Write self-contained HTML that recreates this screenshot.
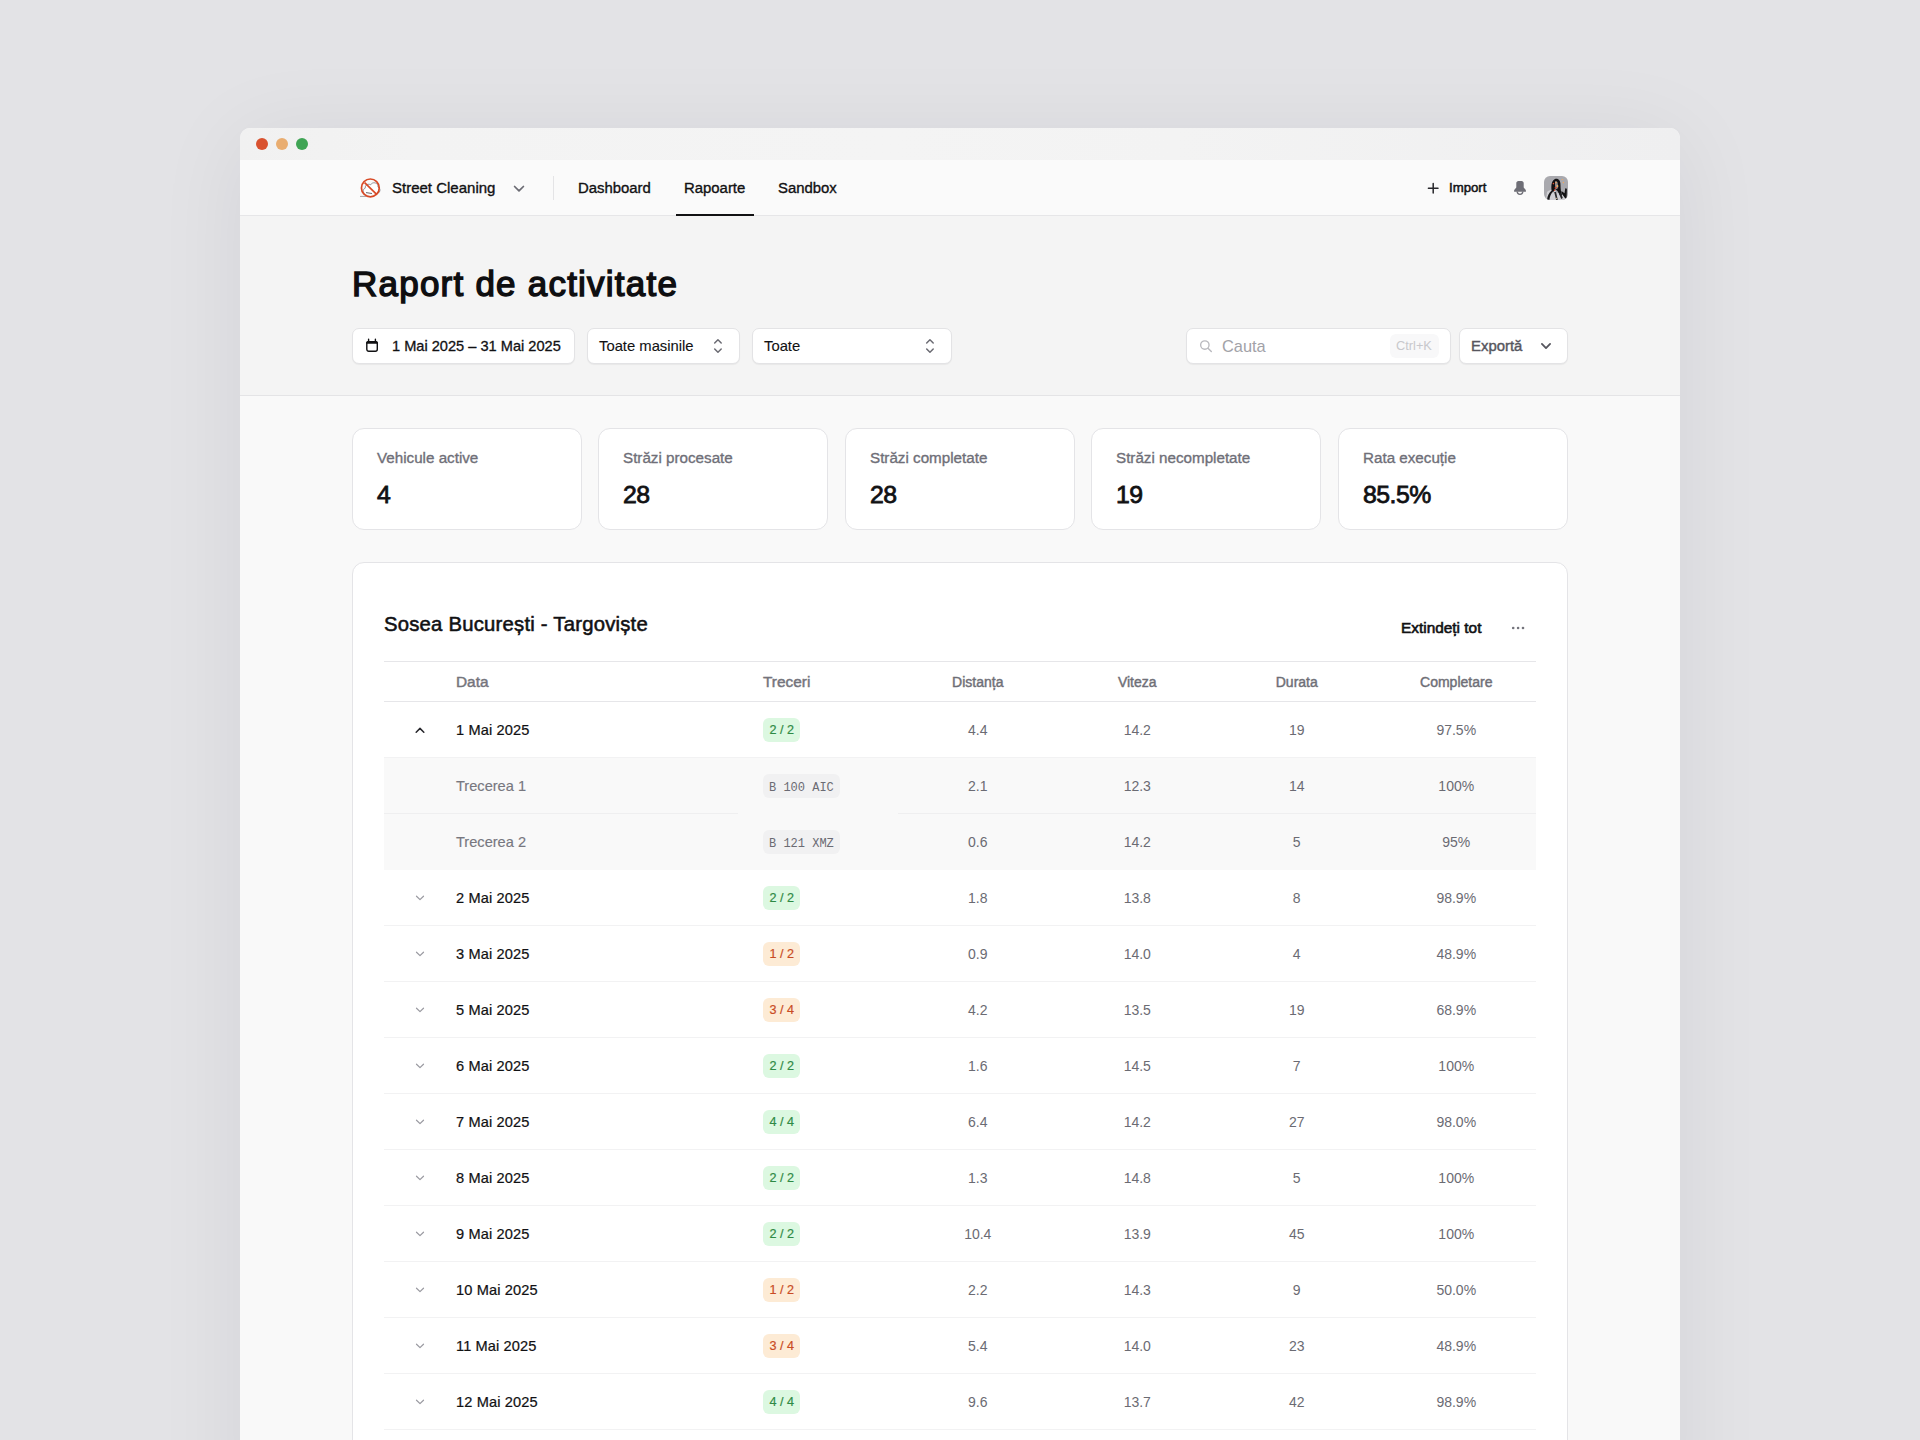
<!DOCTYPE html>
<html><head><meta charset="utf-8">
<style>
*{box-sizing:border-box;margin:0;padding:0}
html,body{width:1920px;height:1440px;overflow:hidden}
body{background:#e3e3e6;font-family:"Liberation Sans",sans-serif;color:#111113;position:relative}
.win{position:absolute;left:240px;top:128px;width:1440px;height:1400px;background:#f9f9f9;border-radius:10px 10px 0 0;overflow:hidden;box-shadow:0 10px 90px rgba(20,20,40,0.07)}
.titlebar{position:absolute;left:0;top:0;width:1440px;height:32px;background:linear-gradient(90deg,#f1f1f1 0%,#f3f3f3 12%,#f4f4f4 45%,#f3f3f3 65%,#efeff0 100%)}
.dot{position:absolute;top:10px;width:12px;height:12px;border-radius:50%}
.nav{position:absolute;left:0;top:32px;width:1440px;height:56px;background:#fafafa;border-bottom:1px solid #e6e6e8}
.hdr{position:absolute;left:0;top:88px;width:1440px;height:180px;background:#f4f4f4;border-bottom:1px solid #e4e4e6}
.a{position:absolute;white-space:nowrap;line-height:20px}
.btn{position:absolute;top:328px;height:36px;background:#fff;border:1px solid #e3e3e5;border-radius:7px;box-shadow:0 1px 1px rgba(0,0,0,0.05)}
.card{position:absolute;top:428px;width:230px;height:102px;background:#fff;border:1px solid #e4e4e7;border-radius:12px}
.card .lbl{position:absolute;left:24px;top:19px;font-size:15.2px;line-height:20px;color:#6f6f78;-webkit-text-stroke:0.35px #6f6f78;white-space:nowrap}
.card .val{position:absolute;left:24px;top:51px;font-size:24.8px;line-height:30px;color:#111113;-webkit-text-stroke:0.8px #111113;letter-spacing:-0.5px}
.tcard{position:absolute;left:352px;top:562px;width:1216px;height:1000px;background:#fff;border:1px solid #e4e4e7;border-radius:12px}
.tbl{position:absolute;left:384px;top:661px;width:1152px;border-top:1px solid #e6e6e9}
.th{display:flex;height:40px;border-bottom:1px solid #e6e6e9;align-items:center;font-size:15.4px;line-height:18px;padding-top:0px;color:#74747c;-webkit-text-stroke:0.45px #74747c}
.tr{display:flex;height:56px;border-bottom:1px solid #f2f2f3;align-items:center;font-size:14.6px;line-height:18px;color:#111113;padding-top:1px}
.tr.sub{background:#f9f9f9;border-bottom-color:#f9f9f9}
.tr.s1{border-bottom-color:transparent;background:linear-gradient(#efeff0,#efeff0) 0 100%/354px 1px no-repeat border-box,linear-gradient(#efeff0,#efeff0) 100% 100%/638px 1px no-repeat border-box,#f9f9f9}
.c0{width:72px;flex:none;display:flex;justify-content:center;padding-right:0}
.c1{width:307px;flex:none;padding-left:0}
.c2{width:135px;flex:none;padding-left:0}
.cn{width:159.5px;flex:none;text-align:center;color:#6b6b73;font-size:14px}
.tr .c1{-webkit-text-stroke:0.22px #111113;letter-spacing:0.12px}
.tr.sub .c1{color:#77777f;-webkit-text-stroke:0.15px #77777f;letter-spacing:0}
.bd{display:inline-block;height:24px;line-height:24px;border-radius:6px;padding:0 6.4px;font-size:12.6px;-webkit-text-stroke:0.2px currentColor}
.bd.g{background:#dcf8e1;color:#2f8a45}
.bd.o{background:#fdebd5;color:#c94b24}
.bd i{font-style:normal;position:relative;top:2px}
.bd.p{background:#f1f1f2;color:#6b6b73;font-family:"Liberation Mono",monospace;font-size:12px;-webkit-text-stroke:0;padding:0 6px}
</style></head><body>
<div class="win">
  <div class="titlebar">
    <div class="dot" style="left:16px;background:#d9522f"></div>
    <div class="dot" style="left:36px;background:#e9ad70"></div>
    <div class="dot" style="left:56px;background:#3fa454"></div>
  </div>
  <div class="nav"></div>
  <div class="hdr"></div>
</div>

<!-- NAV -->
<svg class="a" style="left:356px;top:175px" width="28" height="26" viewBox="0 0 28 26">
  <path d="M8.5 18.5c-1.2-.8-1.6-2.4-1-3.8.3-.8 1-1.3 1.7-1.5-.2-1.8.9-3.5 2.6-3.9 1-.3 2 0 2.8.5.9-1.6 2.8-2.4 4.6-1.9 1.9.5 3 2.3 2.8 4.2 1.4.6 2.2 2.1 1.9 3.6-.3 1.8-1.9 3-3.7 2.9" fill="#fff" stroke="#7a7a80" stroke-width="0.8"/>
  <path d="M10 17.6c2 .3 4 .6 6 .9" stroke="#55555b" stroke-width="0.9"/>
  <path d="M4 21.4h6" stroke="#8a8a90" stroke-width="0.8"/>
  <circle cx="14.35" cy="12.9" r="8.9" fill="none" stroke="#d84a26" stroke-width="1.7"/>
  <path d="M8.6 7.6L20.9 19.6" stroke="#d84a26" stroke-width="1.7"/>
</svg>
<div class="a" style="left:392px;top:178px;font-size:15px;-webkit-text-stroke:0.35px #111113">Street Cleaning</div>
<svg class="a" style="left:513px;top:185px" width="12" height="8" viewBox="0 0 12 8"><path d="M1.6 1.5L6 5.9L10.4 1.5" fill="none" stroke="#6b6b73" stroke-width="1.75" stroke-linecap="round" stroke-linejoin="round"/></svg>
<div class="a" style="left:553px;top:176px;width:1px;height:24px;background:#e4e4e6"></div>
<div class="a" style="left:578px;top:178px;font-size:14.9px;-webkit-text-stroke:0.35px #111113">Dashboard</div>
<div class="a" style="left:684px;top:178px;font-size:14.9px;-webkit-text-stroke:0.35px #111113">Rapoarte</div>
<div class="a" style="left:676px;top:214px;width:78px;height:2px;background:#111113"></div>
<div class="a" style="left:778px;top:178px;font-size:14.9px;-webkit-text-stroke:0.35px #111113">Sandbox</div>

<svg class="a" style="left:1427px;top:182px" width="12" height="12" viewBox="0 0 12 12"><path d="M6.2 1.4v9.6M1.4 6.2h9.6" stroke="#26262b" stroke-width="1.5" stroke-linecap="round"/></svg>
<div class="a" style="left:1449px;top:178px;font-size:13.2px;color:#111113;-webkit-text-stroke:0.5px #111113">Import</div>
<svg class="a" style="left:1508px;top:176px" width="24" height="24" viewBox="0 0 24 24"><path d="M10.4 5h3.2c1.2 0 2.1 1 2.1 2.2v4.3l1.9 2.2c.3.3.3.6.3 1v1.1H6.1v-1.1c0-.4 0-.7.3-1l1.9-2.2V7.2c0-1.2.9-2.2 2.1-2.2z" fill="#6e6e76"/><path d="M9.2 15.6a2.8 2.8 0 0 0 5.6 0" fill="none" stroke="#6e6e76" stroke-width="1.3"/></svg>
<div class="a" style="left:1544px;top:176px;width:24px;height:24px;border-radius:6px;overflow:hidden;background:#a9a9ae">
  <svg width="24" height="24" viewBox="0 0 24 24"><path d="M2 24l1-8c2-2 5-2.3 7-1.5l4 2.5h5l2.5 7z" fill="#d0d0d4"/><path d="M7.6 14.5C7 9.5 7.6 4 11.5 2.8c3.5-.3 5 2.2 5 6.2 0 4 .5 7 1.5 10l-1.8 1-2.7-5-2.5-2-2 3.5z" fill="#111113"/><path d="M3 24c.4-4 2-7.5 4.8-9.5l1.2 1c-2 2-3.2 5-3.6 8.5z" fill="#1a1a1c"/><path d="M10.2 16l2 8h1.6l-1.7-8z" fill="#2a2a2d"/><path d="M15 17.5l2.2 5.5 1.6-1-2-5.5z" fill="#222225"/><path d="M11 5.5c1-.6 2.2-.2 2.6 1l.6 4.5c-.4 1.6-1.4 2.4-2.4 2.2-.6-1.4-.9-3.2-.8-7.7z" fill="#8a8a90"/><circle cx="12" cy="6.6" r=".8" fill="#f0a860"/><circle cx="13.4" cy="10" r="1" fill="#f2b064"/><circle cx="9.4" cy="7.6" r=".8" fill="#e0502e"/><circle cx="11.6" cy="11.8" r="1" fill="#d9482a"/><circle cx="10.5" cy="14.3" r=".7" fill="#d9482a"/><circle cx="18.4" cy="3.6" r=".7" fill="#f0a860"/><circle cx="19.4" cy="6.5" r=".7" fill="#f0a860"/><path d="M17.5 15l3 2.3.8-5 1.6.4-.3 9.8-1.6-.6-3.6-4.6z" fill="#111113"/><circle cx="12.3" cy="22.3" r=".6" fill="#f6dcae"/></svg>
</div>

<!-- HEADER -->
<div class="a" style="left:352px;top:262px;font-size:35px;line-height:44px;letter-spacing:1.23px;color:#0e0e10;-webkit-text-stroke:1.4px #0e0e10">Raport de activitate</div>

<div class="btn" style="left:352px;width:223px"></div>
<svg class="a" style="left:364px;top:337px" width="15" height="16" viewBox="0 0 15 16"><rect x="2.8" y="4.6" width="10.5" height="9.6" rx="1.9" fill="none" stroke="#111113" stroke-width="1.4"/><path d="M2.1 6.8V5.9c0-1.1.9-2 2-2h7.8c1.1 0 2 .9 2 2v.9z" fill="#111113"/><path d="M4.6 2.3v2.6M11.4 2.3v2.6" stroke="#111113" stroke-width="1.4" stroke-linecap="round"/></svg>
<div class="a" style="left:392px;top:336px;font-size:14.6px;-webkit-text-stroke:0.3px #111113">1 Mai 2025 – 31 Mai 2025</div>

<div class="btn" style="left:587px;width:153px"></div>
<div class="a" style="left:599px;top:336px;font-size:14.8px;color:#111113;-webkit-text-stroke:0.1px #111113">Toate masinile</div>
<svg class="a" style="left:712px;top:338px" width="11" height="16" viewBox="0 0 11 16"><path d="M2.7 5L5.95 1.75L9.2 5M2.7 11L5.95 14.25L9.2 11" fill="none" stroke="#6b6b73" stroke-width="1.5" stroke-linecap="round" stroke-linejoin="round"/></svg>

<div class="btn" style="left:752px;width:200px"></div>
<div class="a" style="left:764px;top:336px;font-size:14.8px;color:#111113;-webkit-text-stroke:0.1px #111113">Toate</div>
<svg class="a" style="left:924px;top:338px" width="11" height="16" viewBox="0 0 11 16"><path d="M2.7 5L5.95 1.75L9.2 5M2.7 11L5.95 14.25L9.2 11" fill="none" stroke="#6b6b73" stroke-width="1.5" stroke-linecap="round" stroke-linejoin="round"/></svg>

<div class="btn" style="left:1186px;width:265px"></div>
<svg class="a" style="left:1199px;top:339px" width="14" height="14" viewBox="0 0 14 14"><circle cx="5.85" cy="6" r="4.2" fill="none" stroke="#b9b9be" stroke-width="1.35"/><path d="M9 9.2l3.3 3.3" stroke="#b9b9be" stroke-width="1.4" stroke-linecap="round"/></svg>
<div class="a" style="left:1222px;top:335px;font-size:16.4px;line-height:22px;color:#a2a2a8">Cauta</div>
<div class="a" style="left:1390px;top:334px;width:49px;height:24px;background:#f8f8f9;border-radius:6px"></div>
<div class="a" style="left:1396px;top:336px;font-size:12.8px;color:#c8c8cc">Ctrl+K</div>

<div class="btn" style="left:1459px;width:109px"></div>
<div class="a" style="left:1471px;top:336px;font-size:14.9px;color:#56565e;-webkit-text-stroke:0.4px #56565e">Exportă</div>
<svg class="a" style="left:1539px;top:341px" width="14" height="10" viewBox="0 0 14 10"><path d="M2.9 2.9L7 7.1L11.1 2.9" fill="none" stroke="#56565e" stroke-width="1.8" stroke-linecap="round" stroke-linejoin="round"/></svg>

<!-- STATS -->
<div class="card" style="left:352px"><div class="lbl">Vehicule active</div><div class="val">4</div></div>
<div class="card" style="left:598px"><div class="lbl">Străzi procesate</div><div class="val">28</div></div>
<div class="card" style="left:845px"><div class="lbl">Străzi completate</div><div class="val">28</div></div>
<div class="card" style="left:1091px"><div class="lbl">Străzi necompletate</div><div class="val">19</div></div>
<div class="card" style="left:1338px"><div class="lbl">Rata execuție</div><div class="val">85.5%</div></div>

<!-- TABLE -->
<div class="tcard"></div>
<div class="a" style="left:384px;top:612px;font-size:20.3px;line-height:24px;letter-spacing:0.22px;color:#111113;-webkit-text-stroke:0.55px #111113">Sosea București - Targoviște</div>
<div class="a" style="left:1401px;top:618px;font-size:15.4px;color:#111113;-webkit-text-stroke:0.6px #111113">Extindeți tot</div>
<svg class="a" style="left:1510px;top:624px" width="16" height="8" viewBox="0 0 16 8"><circle cx="3.2" cy="4" r="1.3" fill="#74747c"/><circle cx="8.1" cy="4" r="1.3" fill="#74747c"/><circle cx="13" cy="4" r="1.3" fill="#74747c"/></svg>

<div class="tbl">
<div class="th"><div class="c0"></div><div class="c1">Data</div><div class="c2">Treceri</div><div class="cn">Distanța</div><div class="cn">Viteza</div><div class="cn">Durata</div><div class="cn">Completare</div></div>
<div class="tr"><div class="c0"><svg width="10" height="6" viewBox="0 0 10 6"><path d="M1.2 5.2L5 1.4L8.8 5.2" fill="none" stroke="#26262b" stroke-width="1.5" stroke-linecap="round" stroke-linejoin="round"/></svg></div><div class="c1">1 Mai 2025</div><div class="c2"><span class="bd g">2 / 2</span></div><div class="cn">4.4</div><div class="cn">14.2</div><div class="cn">19</div><div class="cn">97.5%</div></div>
<div class="tr sub s1"><div class="c0"></div><div class="c1">Trecerea 1</div><div class="c2"><span class="bd p"><i>B 100 AIC</i></span></div><div class="cn">2.1</div><div class="cn">12.3</div><div class="cn">14</div><div class="cn">100%</div></div>
<div class="tr sub s2"><div class="c0"></div><div class="c1">Trecerea 2</div><div class="c2"><span class="bd p"><i>B 121 XMZ</i></span></div><div class="cn">0.6</div><div class="cn">14.2</div><div class="cn">5</div><div class="cn">95%</div></div>
<div class="tr"><div class="c0"><svg width="10" height="6" viewBox="0 0 10 6"><path d="M1.5 1.2L5 4.6L8.5 1.2" fill="none" stroke="#9a9aa1" stroke-width="1.2" stroke-linecap="round" stroke-linejoin="round"/></svg></div><div class="c1">2 Mai 2025</div><div class="c2"><span class="bd g">2 / 2</span></div><div class="cn">1.8</div><div class="cn">13.8</div><div class="cn">8</div><div class="cn">98.9%</div></div>
<div class="tr"><div class="c0"><svg width="10" height="6" viewBox="0 0 10 6"><path d="M1.5 1.2L5 4.6L8.5 1.2" fill="none" stroke="#9a9aa1" stroke-width="1.2" stroke-linecap="round" stroke-linejoin="round"/></svg></div><div class="c1">3 Mai 2025</div><div class="c2"><span class="bd o">1 / 2</span></div><div class="cn">0.9</div><div class="cn">14.0</div><div class="cn">4</div><div class="cn">48.9%</div></div>
<div class="tr"><div class="c0"><svg width="10" height="6" viewBox="0 0 10 6"><path d="M1.5 1.2L5 4.6L8.5 1.2" fill="none" stroke="#9a9aa1" stroke-width="1.2" stroke-linecap="round" stroke-linejoin="round"/></svg></div><div class="c1">5 Mai 2025</div><div class="c2"><span class="bd o">3 / 4</span></div><div class="cn">4.2</div><div class="cn">13.5</div><div class="cn">19</div><div class="cn">68.9%</div></div>
<div class="tr"><div class="c0"><svg width="10" height="6" viewBox="0 0 10 6"><path d="M1.5 1.2L5 4.6L8.5 1.2" fill="none" stroke="#9a9aa1" stroke-width="1.2" stroke-linecap="round" stroke-linejoin="round"/></svg></div><div class="c1">6 Mai 2025</div><div class="c2"><span class="bd g">2 / 2</span></div><div class="cn">1.6</div><div class="cn">14.5</div><div class="cn">7</div><div class="cn">100%</div></div>
<div class="tr"><div class="c0"><svg width="10" height="6" viewBox="0 0 10 6"><path d="M1.5 1.2L5 4.6L8.5 1.2" fill="none" stroke="#9a9aa1" stroke-width="1.2" stroke-linecap="round" stroke-linejoin="round"/></svg></div><div class="c1">7 Mai 2025</div><div class="c2"><span class="bd g">4 / 4</span></div><div class="cn">6.4</div><div class="cn">14.2</div><div class="cn">27</div><div class="cn">98.0%</div></div>
<div class="tr"><div class="c0"><svg width="10" height="6" viewBox="0 0 10 6"><path d="M1.5 1.2L5 4.6L8.5 1.2" fill="none" stroke="#9a9aa1" stroke-width="1.2" stroke-linecap="round" stroke-linejoin="round"/></svg></div><div class="c1">8 Mai 2025</div><div class="c2"><span class="bd g">2 / 2</span></div><div class="cn">1.3</div><div class="cn">14.8</div><div class="cn">5</div><div class="cn">100%</div></div>
<div class="tr"><div class="c0"><svg width="10" height="6" viewBox="0 0 10 6"><path d="M1.5 1.2L5 4.6L8.5 1.2" fill="none" stroke="#9a9aa1" stroke-width="1.2" stroke-linecap="round" stroke-linejoin="round"/></svg></div><div class="c1">9 Mai 2025</div><div class="c2"><span class="bd g">2 / 2</span></div><div class="cn">10.4</div><div class="cn">13.9</div><div class="cn">45</div><div class="cn">100%</div></div>
<div class="tr"><div class="c0"><svg width="10" height="6" viewBox="0 0 10 6"><path d="M1.5 1.2L5 4.6L8.5 1.2" fill="none" stroke="#9a9aa1" stroke-width="1.2" stroke-linecap="round" stroke-linejoin="round"/></svg></div><div class="c1">10 Mai 2025</div><div class="c2"><span class="bd o">1 / 2</span></div><div class="cn">2.2</div><div class="cn">14.3</div><div class="cn">9</div><div class="cn">50.0%</div></div>
<div class="tr"><div class="c0"><svg width="10" height="6" viewBox="0 0 10 6"><path d="M1.5 1.2L5 4.6L8.5 1.2" fill="none" stroke="#9a9aa1" stroke-width="1.2" stroke-linecap="round" stroke-linejoin="round"/></svg></div><div class="c1">11 Mai 2025</div><div class="c2"><span class="bd o">3 / 4</span></div><div class="cn">5.4</div><div class="cn">14.0</div><div class="cn">23</div><div class="cn">48.9%</div></div>
<div class="tr"><div class="c0"><svg width="10" height="6" viewBox="0 0 10 6"><path d="M1.5 1.2L5 4.6L8.5 1.2" fill="none" stroke="#9a9aa1" stroke-width="1.2" stroke-linecap="round" stroke-linejoin="round"/></svg></div><div class="c1">12 Mai 2025</div><div class="c2"><span class="bd g">4 / 4</span></div><div class="cn">9.6</div><div class="cn">13.7</div><div class="cn">42</div><div class="cn">98.9%</div></div>
<div class="tr"><div class="c0"><svg width="10" height="6" viewBox="0 0 10 6"><path d="M1.5 1.2L5 4.6L8.5 1.2" fill="none" stroke="#9a9aa1" stroke-width="1.2" stroke-linecap="round" stroke-linejoin="round"/></svg></div><div class="c1">13 Mai 2025</div><div class="c2"><span class="bd g">2 / 2</span></div><div class="cn">3.1</div><div class="cn">14.1</div><div class="cn">12</div><div class="cn">100%</div></div></div>
</body></html>
